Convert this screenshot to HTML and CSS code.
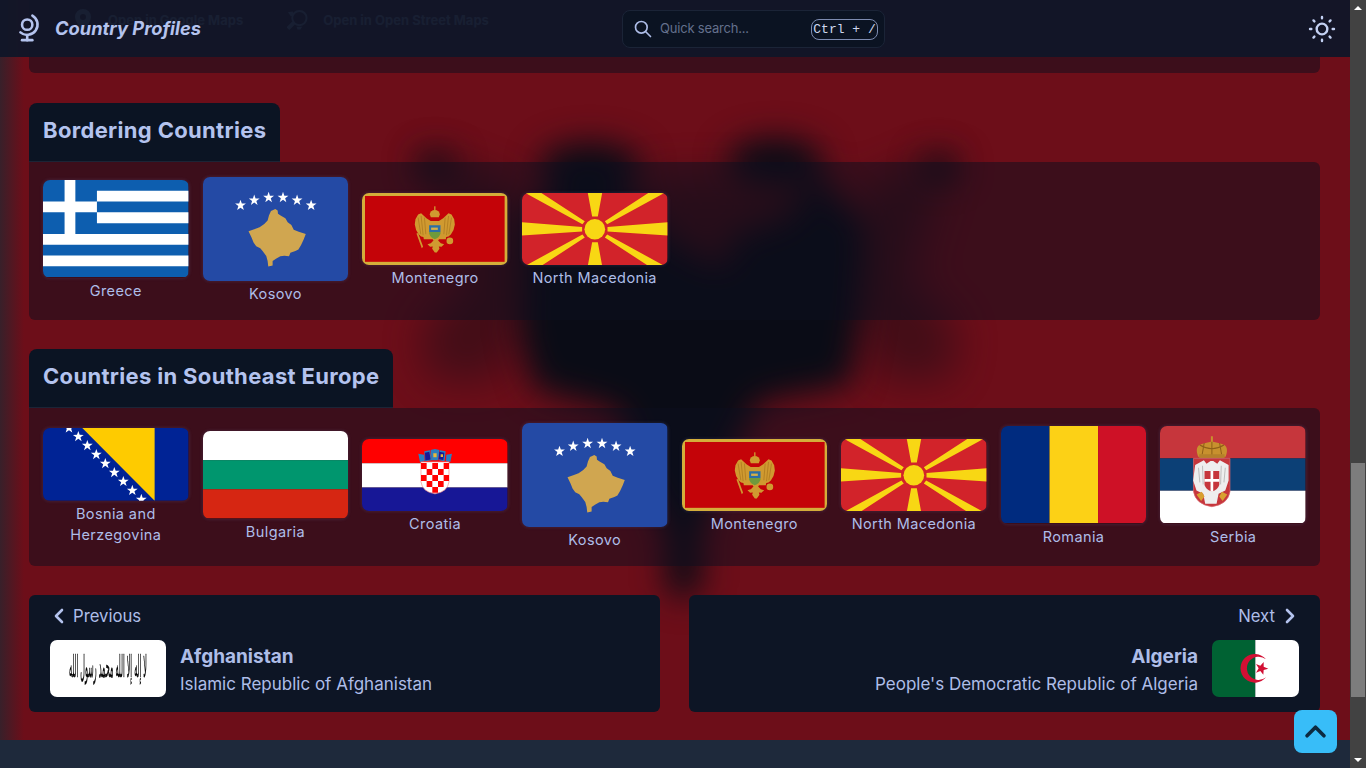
FILE: index.html
```html
<!DOCTYPE html>
<html lang="en">
<head>
<meta charset="utf-8">
<title>Country Profiles</title>
<link rel="stylesheet" href="styles.css">
</head>
<body>
<svg class="defs" aria-hidden="true">
  <defs>
    <polygon id="star" points="0,-17 4,-5.4 16.2,-5.3 6.4,2 10,13.8 0,6.7 -10,13.8 -6.4,2 -16.2,-5.3 -4,-5.4"/>
    <symbol id="f-greece" viewBox="0 0 27 18" preserveAspectRatio="none">
      <rect width="27" height="18" fill="#0d5eaf"/>
      <path d="M10 2h17v2H10zM10 6h17v2H10zM0 10h27v2H0zM0 14h27v2H0zM4 0h2v10H4zM0 4h10v2H0z" fill="#fff"/>
    </symbol>
    <symbol id="f-kosovo" viewBox="519 21 435 308" preserveAspectRatio="none">
      <rect x="519" y="21" width="435" height="308" fill="#244aa5"/>
      <g fill="#fff">
        <use href="#star" x="631" y="105"/><use href="#star" x="672" y="90"/><use href="#star" x="715" y="82"/>
        <use href="#star" x="758" y="82"/><use href="#star" x="800" y="90"/><use href="#star" x="842" y="105"/>
      </g>
      <path fill="#d0a650" d="M735 116L742 120L743 130L752 136L765 143L772 155L783 163L790 177L805 183L826 190L820 205L812 222L804 236L795 240L780 245L776 256L762 254L750 256L737 263L727 270L727 283L714 286L712 270L708 255L697 240L690 232L678 226L670 215L664 200L655 182L672 176L688 170L702 160L712 150L716 135L722 122Z"/>
    </symbol>
    <symbol id="f-montenegro" viewBox="37 66 436 219" preserveAspectRatio="none">
      <rect x="37" y="66" width="436" height="219" fill="#d4ae3a"/>
      <rect x="46" y="75" width="418" height="198" fill="#c40308"/>
      <g fill="#d09a30">
        <path d="M214 150h82l-8 55h-66z"/>
        <path d="M245 152l-15-10-16-15-9 4-8 14-2 16 4 16 8 14 7 6 10 2 11-6 6-14z"/>
        <path d="M265 152l15-10 16-15 9 4 8 14 2 16-4 16-8 14-7 6-10 2-11-6-6-14z"/>
        <path d="M240 150h30l3 45-8 14 8 8 10 3-8 8-8-1 2 7-8 11-6 0-8-11 2-7-8 1-8-8 10-3 8-8-8-14z"/>
        <path d="M240 131a15 14 0 0 1 30 0l-3 8h-24z"/>
        <rect x="253" y="106" width="4" height="12"/>
        <path d="M200 188l5-2 15 42-4 4z"/>
        <circle cx="300" cy="210" r="10"/>
      </g>
      <path d="M205 140l8 50M214 135l6 58M224 140l4 50M305 140l-8 50M296 135l-6 58M286 140l-4 50" stroke="#a8741c" stroke-width="2" fill="none"/>
      <path d="M238 163h34v20h-34z" fill="#2b6ea6"/>
      <path d="M238 183h34v4q-3 14-17 18q-14-4-17-18z" fill="#6f9a3c"/>
      <rect x="244" y="170" width="20" height="7" fill="#d6b048"/>
    </symbol>
    <symbol id="f-macedonia" viewBox="515 66 436 219" preserveAspectRatio="none">
      <rect x="515" y="66" width="436" height="219" fill="#d2232a"/>
      <g fill="#f8d714">
        <circle cx="733" cy="175" r="31"/>
        <path d="M712 66h43l-13 71h-17zM712 285h43l-13-71h-17zM515 154l180 14v14l-180 12zM951 154l-180 14v14l180 12z"/>
        <path d="M525 66h48l130 85-7 9zM941 66h-48l-130 85 7 9zM525 285h48l130-85-7-9zM941 285h-48l-130-85 7-9z"/>
      </g>
    </symbol>
    <symbol id="f-bosnia" viewBox="37 36 437 219" preserveAspectRatio="none">
      <rect x="37" y="36" width="437" height="219" fill="#002395"/>
      <path d="M155 36h217v219z" fill="#fecb00"/>
      <g fill="#fff">
        <use href="#star" x="115" y="36"/><use href="#star" x="143" y="62"/><use href="#star" x="170" y="89"/>
        <use href="#star" x="197" y="116"/><use href="#star" x="224" y="143"/><use href="#star" x="251" y="170"/>
        <use href="#star" x="278" y="197"/><use href="#star" x="305" y="224"/><use href="#star" x="332" y="251"/>
      </g>
    </symbol>
    <symbol id="f-bulgaria" viewBox="0 0 5 3" preserveAspectRatio="none">
      <rect width="5" height="1" fill="#fff"/><rect y="1" width="5" height="1" fill="#00966e"/><rect y="2" width="5" height="1" fill="#d62612"/>
    </symbol>
    <symbol id="f-croatia" viewBox="36 69 437 219" preserveAspectRatio="none">
      <rect x="36" y="69" width="437" height="73" fill="#f00"/>
      <rect x="36" y="142" width="437" height="73" fill="#fff"/>
      <rect x="36" y="215" width="437" height="73" fill="#171796"/>
      <path d="M205 113l17 3 2 20-14 2zM223 106l17-3 5 30-20 3zM242 102l13-3 13 3-3 31h-20zM270 103l17 3-3 30-17-3zM289 116l17-3-5 25-13-2z" fill="#2b7fc0"/>
      <path d="M225 110l13-3 4 24-16 3zM268 107l15 3-3 22-14-2z" fill="#171796"/>
      <path d="M250 112h10v12h-10zM272 115h7v8h-7z" fill="#e8b93a"/>
      <path d="M213 138h84v60q-4 30-42 36q-38-6-42-36z" fill="#fff" stroke="#f58a8a" stroke-width="2"/>
      <path d="M213 141h17v18h-17zM247 141h17v18h-17zM281 141h16v18h-16zM230 159h17v18h-17zM264 159h17v18h-17zM213 177h17v18h-17zM247 177h17v18h-17zM281 177h16v18h-16zM230 195h17v18h-17zM264 195h17v18h-17zM247 213h17v18h-17z" fill="#f00"/>
    </symbol>
    <symbol id="f-romania" viewBox="0 0 3 2" preserveAspectRatio="none">
      <rect width="1" height="2" fill="#002b7f"/><rect x="1" width="1" height="2" fill="#fcd116"/><rect x="2" width="1" height="2" fill="#ce1126"/>
    </symbol>
    <symbol id="f-serbia" viewBox="513 33 435 291" preserveAspectRatio="none">
      <rect x="513" y="33" width="435" height="97" fill="#c6363c"/>
      <rect x="513" y="130" width="435" height="97" fill="#0c4076"/>
      <rect x="513" y="227" width="435" height="97" fill="#fff"/>
      <path d="M627 125q-12-32 11-38q14-5 27-7v-16h6v16q14 2 27 7q23 6 11 38z" fill="#c8912e"/>
      <path d="M632 90q36 22 72 0M668 80v40M645 84l-6 34M691 84l6 34" stroke="#8f5f18" stroke-width="3" fill="none"/>
      <path d="M630 118h76v12h-76z" fill="#b5802a"/>
      <path d="M613 130h109v100q-6 38-54 45q-48-7-55-45z" fill="#c6363c" stroke="#d96a70" stroke-width="2"/>
      <path d="M618 150l26-14 8 10 12-8h8l12 8 8-10 26 14 0 46-10 30-20 10-6 30h-34l-6-30-20-10-10-30z" fill="#eeeeee"/>
      <path d="M628 158l4 44M640 152l2 56M696 152l-2 56M708 158l-4 44" stroke="#bdbdbd" stroke-width="3" fill="none"/>
      <path d="M646 168h44v42q-4 14-22 20q-18-6-22-20z" fill="#c6363c"/>
      <path d="M664 168h8v62h-8zM646 192h44v8h-44z" fill="#fff"/>
      <path d="M622 238l16-8 8 14-10 14zM714 238l-16-8-8 14 10 14z" fill="#d8a030"/>
    </symbol>
    <symbol id="f-algeria" viewBox="1056 150 261 171" preserveAspectRatio="none">
      <rect x="1056" y="150" width="130" height="171" fill="#006233"/>
      <rect x="1186" y="150" width="131" height="171" fill="#fff"/>
      <path fill="#d21034" fill-rule="evenodd" d="M1218 208a43 43 0 1 0 0 54a35 35 0 1 1 0-54z"/>
      <polygon fill="#d21034" points="1188,222 1201,227 1211,216 1211,230 1225,236 1211,240 1210,254 1201,243 1188,248 1196,235"/>
    </symbol>
  </defs>
</svg>

<div class="page">
  <svg class="backdrop" viewBox="0 0 1350 768" aria-hidden="true">
    <g class="eagle-soft">
      <path d="M420 150L520 190L530 290L500 380L430 380L420 330L470 280z"/>
      <path d="M950 150L860 190L850 290L880 380L950 380L960 330L910 280z"/>
      <path d="M640 175L830 175L830 275L660 275z"/>
    </g>
    <g class="eagle">
      <ellipse cx="435" cy="165" rx="20" ry="12"/>
      <ellipse cx="590" cy="168" rx="52" ry="26"/>
      <ellipse cx="775" cy="162" rx="48" ry="24"/>
      <ellipse cx="940" cy="168" rx="20" ry="12"/>
      <path d="M520 215L560 185L640 195L672 240L722 266L735 235L790 218L812 175L868 225L862 320L850 385L760 402L745 430L720 480L700 540L702 585L683 602L665 585L668 540L640 480L618 412L535 390L518 335z"/>
    </g>
  </svg>

  <main class="content">
    <section class="links-panel">
      <div class="map-link">
        <svg class="map-icon" viewBox="0 0 16 22"><path d="M8 0a8 8 0 0 0-8 8c0 5 8 14 8 14s8-9 8-14a8 8 0 0 0-8-8zm0 11a3 3 0 1 1 0-6 3 3 0 0 1 0 6z" fill="currentColor"/></svg>
        <span class="map-text">Open in Google Maps</span>
      </div>
      <div class="map-link map-link-osm">
        <svg class="map-icon-osm" viewBox="0 0 22 22"><circle cx="13" cy="9" r="7.5" fill="none" stroke="currentColor" stroke-width="2"/><path d="M7 14L1 20" stroke="currentColor" stroke-width="4"/><path d="M1 3l5-1 1 4-3 1zM10 18h6l-2 3h-3z" fill="currentColor"/></svg>
        <span class="map-text">Open in Open Street Maps</span>
      </div>
    </section>

    <section class="block">
      <h2 class="tab">Bordering Countries</h2>
      <div class="grid">
        <a class="country"><svg class="flag r32"><use href="#f-greece"/></svg><span class="label">Greece</span></a>
        <a class="country"><svg class="flag r75"><use href="#f-kosovo"/></svg><span class="label">Kosovo</span></a>
        <a class="country"><svg class="flag r21"><use href="#f-montenegro"/></svg><span class="label">Montenegro</span></a>
        <a class="country"><svg class="flag r21"><use href="#f-macedonia"/></svg><span class="label">North Macedonia</span></a>
      </div>
    </section>

    <section class="block">
      <h2 class="tab">Countries in Southeast Europe</h2>
      <div class="grid">
        <a class="country"><svg class="flag r21"><use href="#f-bosnia"/></svg><span class="label">Bosnia and Herzegovina</span></a>
        <a class="country"><svg class="flag r53"><use href="#f-bulgaria"/></svg><span class="label">Bulgaria</span></a>
        <a class="country"><svg class="flag r21"><use href="#f-croatia"/></svg><span class="label">Croatia</span></a>
        <a class="country"><svg class="flag r75"><use href="#f-kosovo"/></svg><span class="label">Kosovo</span></a>
        <a class="country"><svg class="flag r21"><use href="#f-montenegro"/></svg><span class="label">Montenegro</span></a>
        <a class="country"><svg class="flag r21"><use href="#f-macedonia"/></svg><span class="label">North Macedonia</span></a>
        <a class="country"><svg class="flag r32"><use href="#f-romania"/></svg><span class="label">Romania</span></a>
        <a class="country"><svg class="flag r32"><use href="#f-serbia"/></svg><span class="label">Serbia</span></a>
      </div>
    </section>

    <nav class="pager">
      <a class="pager-card">
        <div class="pager-dir">
          <svg class="chev chev-prev" viewBox="0 0 24 24"><path d="M15 6l-6 6l6 6"/></svg>
          <span>Previous</span>
        </div>
        <div class="pager-body">
          <svg class="afg" viewBox="0 0 116 57">
            <rect width="116" height="57" fill="#fff"/>
            <text class="shahada" transform="translate(58 37) scale(.4 1.9)" text-anchor="middle" direction="rtl">لا إله إلا الله محمد رسول الله</text>
          </svg>
          <div class="pager-text">
            <strong class="pager-name">Afghanistan</strong>
            <span class="pager-sub">Islamic Republic of Afghanistan</span>
          </div>
        </div>
      </a>
      <a class="pager-card pager-next">
        <div class="pager-dir">
          <span>Next</span>
          <svg class="chev chev-next" viewBox="0 0 24 24"><path d="M9 6l6 6l-6 6"/></svg>
        </div>
        <div class="pager-body">
          <div class="pager-text">
            <strong class="pager-name">Algeria</strong>
            <span class="pager-sub">People's Democratic Republic of Algeria</span>
          </div>
          <svg class="alg"><use href="#f-algeria"/></svg>
        </div>
      </a>
    </nav>

    <footer class="footer"></footer>
  </main>

  <header class="topbar">
    <div class="brand">
      <svg class="brand-icon" viewBox="0 0 24 24"><path d="M7 9a4 4 0 1 0 8 0a4 4 0 0 0-8 0"/><path d="M5.75 15a8.015 8.015 0 1 0 9.25-13"/><path d="M11 17v4"/><path d="M7 21h8"/></svg>
      <span class="brand-name">Country Profiles</span>
    </div>
    <div class="search">
      <svg class="search-icon" viewBox="0 0 24 24"><path d="M10 10m-7 0a7 7 0 1 0 14 0a7 7 0 1 0-14 0"/><path d="M21 21l-6-6"/></svg>
      <span class="search-hint">Quick search...</span>
      <kbd class="kbd">Ctrl + /</kbd>
    </div>
    <svg class="sun" viewBox="0 0 24 24"><path d="M12 12m-4 0a4 4 0 1 0 8 0a4 4 0 1 0-8 0"/><path d="M3 12h1m8-9v1m8 8h1m-9 8v1m-6.4-15.4l.7.7m12.1-.7l-.7.7m0 11.4l.7.7m-12.1-.7l-.7.7"/></svg>
  </header>

  <button class="to-top" aria-label="Back to top">
    <svg viewBox="0 0 24 24"><path d="M5 15.5l7-7l7 7"/></svg>
  </button>
</div>

<aside class="scrollbar" aria-hidden="true">
  <span class="arrow-up"></span>
  <div class="track"><div class="thumb"></div></div>
  <span class="arrow-down"></span>
</aside>
</body>
</html>
```

FILE: styles.css
```css
* { box-sizing: border-box; }

html, body { margin: 0; height: 768px; overflow: hidden; }

body {
  display: flex;
  background: #1e293b;
  font-family: Inter, "Noto Sans", "Liberation Sans", sans-serif;
  color: #aebde8;
}

.defs { position: absolute; width: 0; height: 0; }

.page {
  position: relative;
  flex: 1;
  min-width: 0;
  height: 768px;
  overflow: hidden;
  background: linear-gradient(90deg, #38202a 0, #6d0e19 24px);
}

.backdrop { position: absolute; left: 0; top: 0; width: 1350px; height: 768px; }
.eagle { fill: #0a0c16; filter: blur(16px); }
.eagle-soft { fill: #0a0c16; opacity: .42; filter: blur(20px); }

.content { position: relative; display: flex; flex-direction: column; height: 768px; padding: 0 0 0 29px; }

.links-panel {
  display: flex;
  align-items: flex-start;
  gap: 44px;
  width: 1291px;
  height: 73px;
  flex: none;
  padding: 9px 0 0 46px;
  background: rgba(11, 14, 29, .5);
  border-radius: 0 0 6px 6px;
}

.map-link { display: flex; align-items: flex-start; gap: 17px; color: #aebde8; }
.map-link-osm { gap: 15px; }
.map-icon { width: 16px; height: 22px; }
.map-icon-osm { width: 21px; height: 22px; }
.map-text { font-size: 13px; font-weight: 700; line-height: 22px; }

.block { flex: none; width: 1291px; margin-top: 30px; }
.block + .block { margin-top: 29px; }

.tab {
  display: table;
  margin: 0;
  height: 59px;
  padding: 0 14px;
  background: #0b1423;
  border-bottom: 1px solid #1c2436;
  border-radius: 8px 8px 0 0;
  font-size: 22px;
  font-weight: 700;
  line-height: 55px;
  color: #b4c3ee;
  letter-spacing: .33px;
}

.grid {
  display: grid;
  grid-template-columns: repeat(8, minmax(0, 1fr));
  gap: 14px;
  align-items: center;
  height: 158px;
  padding: 14px 14px 15px;
  background: rgba(11, 14, 29, .5);
  border-radius: 0 6px 6px 6px;
}

.country { display: flex; flex-direction: column; align-items: center; text-align: center; }

.flag {
  display: block;
  width: 100%;
  border-radius: 7px;
  box-shadow: 0 0 3px 1px rgba(120, 130, 190, .14);
}
.r32 { aspect-ratio: 3 / 2; }
.r75 { aspect-ratio: 7 / 5; }
.r21 { aspect-ratio: 2 / 1; }
.r53 { aspect-ratio: 5 / 3; }

.label { display: block; margin-top: 2px; font-size: 14.5px; line-height: 21px; letter-spacing: .4px; color: #aebde8; }

.pager { display: flex; gap: 29px; flex: none; width: 1291px; margin-top: 29px; }

.pager-card {
  flex: 1;
  height: 117px;
  padding: 9px 21px 0;
  background: #0d1525;
  border-radius: 6px;
}

.pager-dir { display: flex; align-items: center; gap: 2px; height: 24px; font-size: 16.7px; color: #aebde8; }
.pager-next .pager-dir { justify-content: flex-end; gap: 3px; }

.chev { flex: none; width: 24px; height: 24px; fill: none; stroke: #b4c3ee; stroke-width: 2.6; stroke-linecap: round; stroke-linejoin: round; }
.chev-prev { margin-left: -3px; }
.chev-next { margin-right: -3px; }

.pager-body { display: flex; align-items: flex-start; gap: 14px; margin-top: 12px; }
.pager-next .pager-body { justify-content: flex-end; text-align: right; }

.afg, .alg { flex: none; display: block; height: 57px; border-radius: 7px; }
.afg { width: 116px; }
.alg { width: 87px; }

.shahada { font-family: "DejaVu Sans", sans-serif; font-size: 16px; fill: #000; stroke: #000; stroke-width: .25px; opacity: .99; text-rendering: geometricPrecision; }

.pager-text { display: flex; flex-direction: column; }
.pager-name { font-size: 19px; font-weight: 700; line-height: 28px; padding-top: 3px; color: #aebde8; }
.pager-sub { font-size: 17px; line-height: 27px; color: #aebde8; }

.footer { flex: none; width: 1350px; height: 60px; margin: 28px 0 0 -29px; background: #1e293b; }

.topbar {
  position: absolute;
  left: 0;
  top: 0;
  width: 1350px;
  height: 57px;
  display: flex;
  align-items: center;
  justify-content: space-between;
  padding: 0 12px 0 13px;
  background: rgba(16, 22, 40, .95);
}

.brand { display: flex; align-items: center; gap: 11px; width: 260px; }
.brand-icon { flex: none; width: 31px; height: 31px; fill: none; stroke: #b4c3ee; stroke-width: 2; stroke-linecap: round; stroke-linejoin: round; }
.brand-name { padding-bottom: 2px; font-size: 18.3px; font-weight: 700; font-style: italic; color: #b4c3ee; }

.search {
  position: absolute;
  left: 622px;
  top: 10px;
  display: flex;
  align-items: center;
  width: 263px;
  height: 38px;
  padding: 0 6px 0 10px;
  background: #0b1322;
  border: 1px solid #1b2437;
  border-radius: 8px;
}
.search-icon { width: 20px; height: 20px; fill: none; stroke: #aebde8; stroke-width: 2; stroke-linecap: round; stroke-linejoin: round; }
.search-hint { margin: 0 0 2px 7px; flex: 1; font-size: 13px; letter-spacing: -.2px; color: #64708c; }
.kbd {
  width: 67px;
  height: 21px;
  border: 1px solid #7d8bb0;
  border-radius: 8px;
  font-family: "Liberation Mono", monospace;
  font-size: 13px;
  line-height: 19px;
  text-align: center;
  color: #cfd8ee;
}

.sun { width: 32px; height: 32px; fill: none; stroke: #c3d0f2; stroke-width: 1.8; stroke-linecap: round; stroke-linejoin: round; }

.to-top {
  position: absolute;
  left: 1294px;
  top: 710px;
  width: 43px;
  height: 43px;
  padding: 7px;
  border: 0;
  border-radius: 8px;
  background: #38bdf8;
}
.to-top svg { display: block; width: 29px; height: 29px; fill: none; stroke: #0c2a40; stroke-width: 3; stroke-linecap: round; stroke-linejoin: round; }

.scrollbar {
  flex: none;
  width: 16px;
  height: 768px;
  display: flex;
  flex-direction: column;
  align-items: center;
  background: #424242;
}
.arrow-up, .arrow-down { flex: none; width: 0; height: 0; border-left: 4px solid transparent; border-right: 4px solid transparent; }
.arrow-up { margin: 6px 0; border-bottom: 4px solid #fff; }
.arrow-down { margin: 6px 0; border-top: 4px solid #fff; }
.track { flex: 1; width: 100%; display: flex; flex-direction: column; justify-content: flex-end; padding: 0 1px 55px; }
.thumb { width: 100%; height: 234px; background: #7d7d7d; }
```
